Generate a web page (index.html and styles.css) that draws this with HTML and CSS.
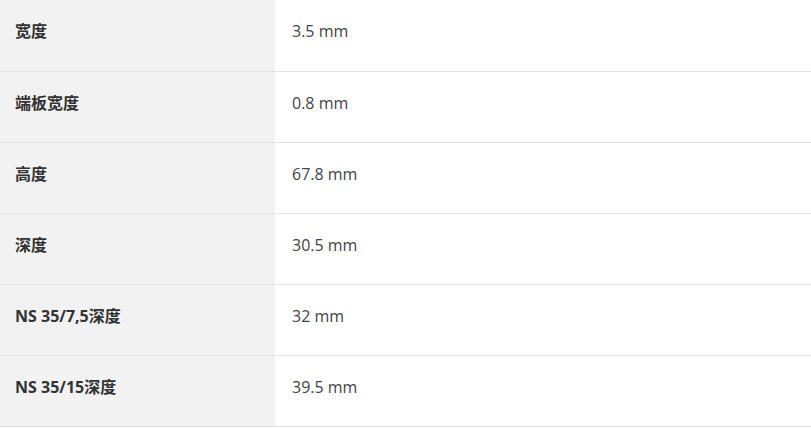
FILE: index.html
```html
<!DOCTYPE html>
<html lang="zh">
<head>
<meta charset="utf-8">
<link rel="stylesheet" href="styles.css">
</head>
<body>
<table class="specs">
  <tbody>
    <tr><th>宽度</th><td>3.5 mm</td></tr>
    <tr><th>端板宽度</th><td>0.8 mm</td></tr>
    <tr><th>高度</th><td>67.8 mm</td></tr>
    <tr><th>深度</th><td>30.5 mm</td></tr>
    <tr><th>NS 35/7,5深度</th><td>32 mm</td></tr>
    <tr><th>NS 35/15深度</th><td>39.5 mm</td></tr>
  </tbody>
</table>
</body>
</html>
```
FILE: styles.css
```css
html, body {
  margin: 0;
  padding: 0;
  background: #fff;
}
.specs {
  width: 811px;
  border-collapse: collapse;
  font-family: "Open Sans", "Noto Sans CJK SC", sans-serif;
  font-size: 16px;
  line-height: 22px;
  color: #333;
}
.specs tr {
  height: 71.17px;
  border-bottom: 1px solid #e3e3e6;
}
.specs th,
.specs td {
  padding: 20px 0 28px;
  vertical-align: top;
  text-align: left;
}
.specs th {
  width: 260px;
  padding-left: 15px;
  background: #f2f2f2;
  font-weight: 700;
  color: #333;
}
.specs td {
  padding-left: 17px;
  font-weight: 400;
  color: #444;
}
```
